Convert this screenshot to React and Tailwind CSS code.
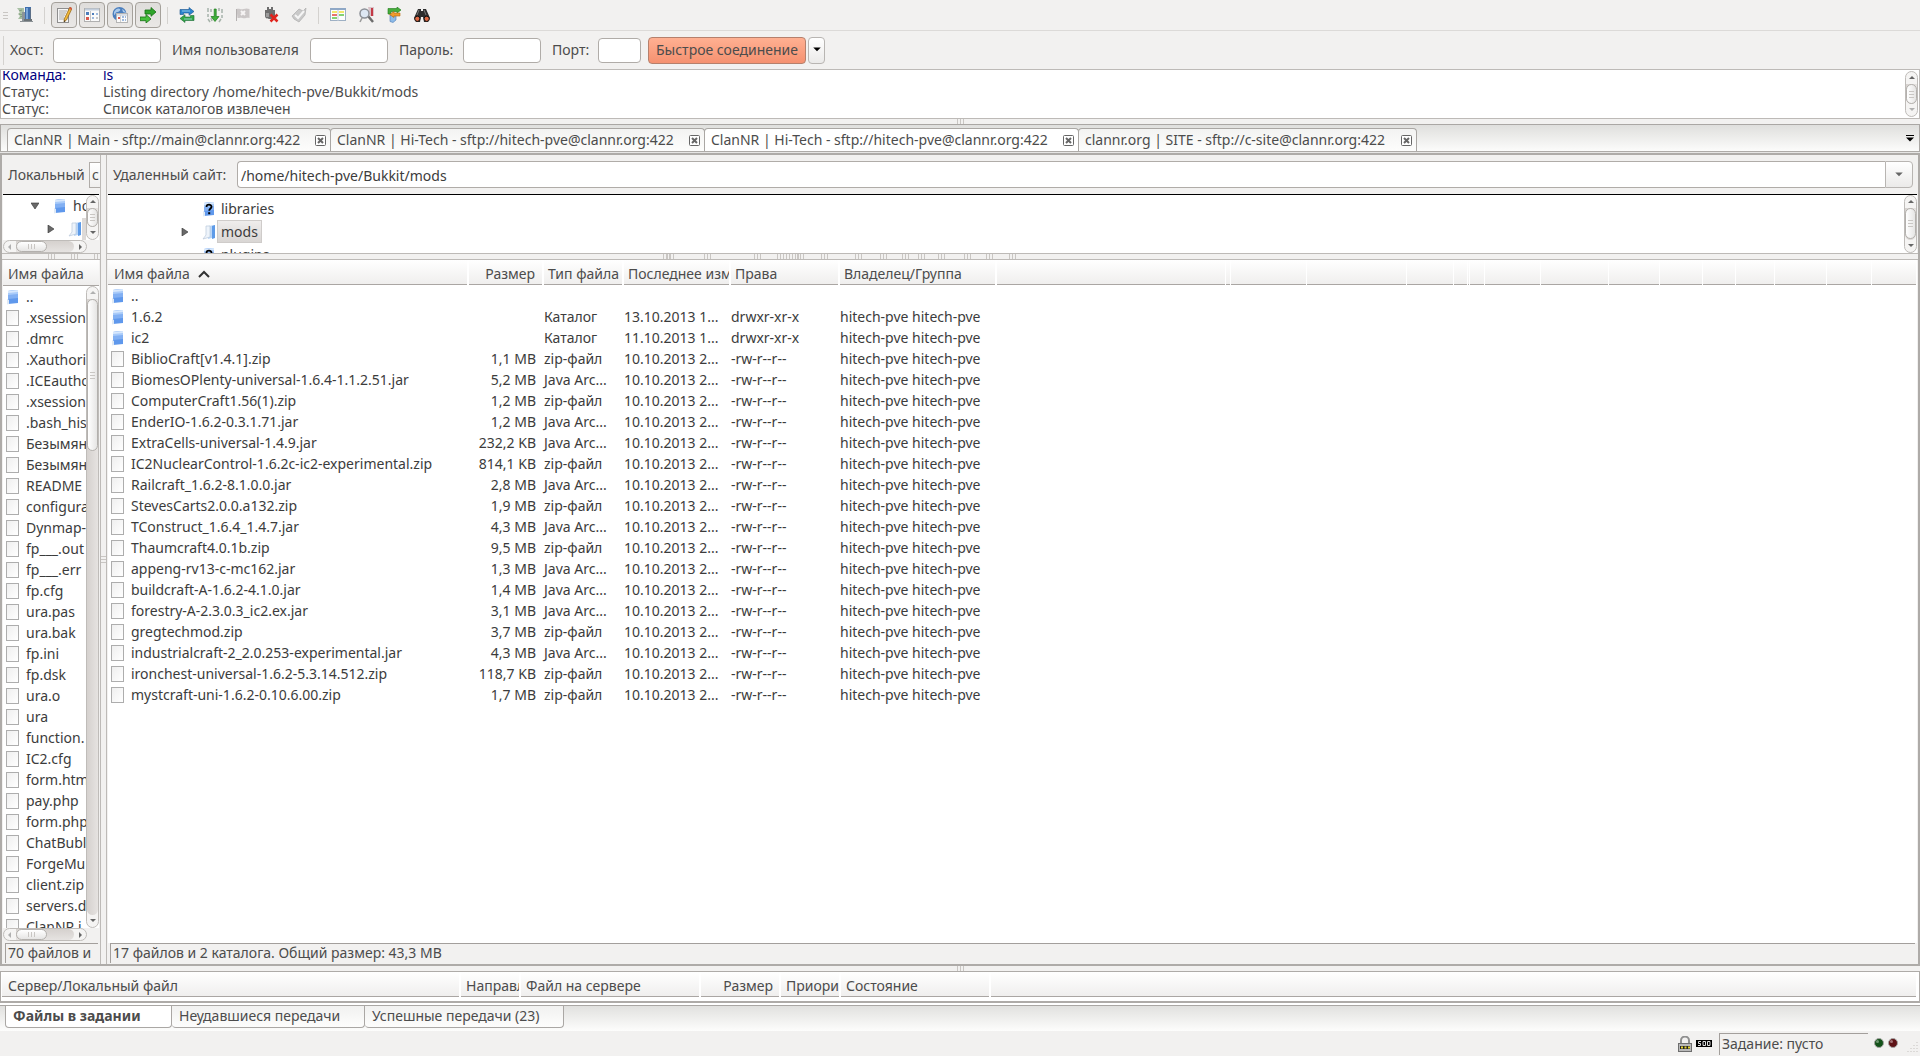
import { useState } from "react";
import clsx from "clsx";

const logLines = [
  { kind: "Команда:", text: "ls", command: true },
  { kind: "Статус:", text: "Listing directory /home/hitech-pve/Bukkit/mods" },
  { kind: "Статус:", text: "Список каталогов извлечен" },
];

const connections = [
  { id: 1, title: "ClanNR | Main - sftp://main@clannr.org:422", width: "w-[324px]" },
  { id: 2, title: "ClanNR | Hi-Tech - sftp://hitech-pve@clannr.org:422", width: "w-[375px]" },
  { id: 3, title: "ClanNR | Hi-Tech - sftp://hitech-pve@clannr.org:422", width: "w-[375px]" },
  { id: 4, title: "clannr.org | SITE - sftp://c-site@clannr.org:422", width: "w-[339px]" },
];

const localFiles = [
  "..", ".xsession", ".dmrc", ".Xauthori", ".ICEautho", ".xsession", ".bash_his", "Безымян",
  "Безымян", "README", "configura", "Dynmap-", "fp___.out", "fp___.err", "fp.cfg", "ura.pas",
  "ura.bak", "fp.ini", "fp.dsk", "ura.o", "ura", "function.", "IC2.cfg", "form.htm", "pay.php",
  "form.php", "ChatBubl", "ForgeMu", "client.zip", "servers.d", "ClanNR.j",
];

const dir = (name, date) => ({ name, size: "", type: "Каталог", date, perms: "drwxr-xr-x", owner: "hitech-pve hitech-pve", folder: true });
const file = (name, size) => ({
  name,
  size,
  type: name.endsWith(".zip") ? "zip-файл" : "Java Arc...",
  date: "10.10.2013 2...",
  perms: "-rw-r--r--",
  owner: "hitech-pve hitech-pve",
});

const remoteFiles = [
  { name: "..", size: "", type: "", date: "", perms: "", owner: "", folder: true },
  dir("1.6.2", "13.10.2013 1..."),
  dir("ic2", "11.10.2013 1..."),
  file("BiblioCraft[v1.4.1].zip", "1,1 MB"),
  file("BiomesOPlenty-universal-1.6.4-1.1.2.51.jar", "5,2 MB"),
  file("ComputerCraft1.56(1).zip", "1,2 MB"),
  file("EnderIO-1.6.2-0.3.1.71.jar", "1,2 MB"),
  file("ExtraCells-universal-1.4.9.jar", "232,2 KB"),
  file("IC2NuclearControl-1.6.2c-ic2-experimental.zip", "814,1 KB"),
  file("Railcraft_1.6.2-8.1.0.0.jar", "2,8 MB"),
  file("StevesCarts2.0.0.a132.zip", "1,9 MB"),
  file("TConstruct_1.6.4_1.4.7.jar", "4,3 MB"),
  file("Thaumcraft4.0.1b.zip", "9,5 MB"),
  file("appeng-rv13-c-mc162.jar", "1,3 MB"),
  file("buildcraft-A-1.6.2-4.1.0.jar", "1,4 MB"),
  file("forestry-A-2.3.0.3_ic2.ex.jar", "3,1 MB"),
  file("gregtechmod.zip", "3,7 MB"),
  file("industrialcraft-2_2.0.253-experimental.jar", "4,3 MB"),
  file("ironchest-universal-1.6.2-5.3.14.512.zip", "118,7 KB"),
  file("mystcraft-uni-1.6.2-0.10.6.00.zip", "1,7 MB"),
];

// empty header cells right of the owner column
const spareColumns = [229, 5, 76, 100, 47, 14, 2, 15, 56, 68, 51, 43, 33, 39, 52, 45];
const gripOffsets = [556, 560, 597, 647, 670, 673, 676, 679, 682, 685, 690, 714, 748, 773, 795, 811, 831, 857, 879, 902];

/* ---------- icons ---------- */

function Icon({ children }) {
  return (
    <svg viewBox="0 0 16 16" className="w-4 h-4 shrink-0" aria-hidden="true">
      {children}
    </svg>
  );
}

function SiteManagerIcon() {
  return (
    <Icon>
      <path d="M0 1h7v11H1l2-3-2-2 2-2z" fill="#a9c0a4" />
      <path d="M2 4l3-1M2 7l4 1M3 10l3-1" stroke="#7f9c7b" />
      <rect x="5" y="5" width="3" height="9" fill="#8b9499" />
      <rect x="8" y="0" width="6" height="13" fill="#3f6fae" />
      <rect x="9" y="1" width="2" height="11" fill="#7aa6d8" />
      <rect x="13" y="1" width="1" height="12" fill="#5c6f88" />
      <path d="M3 14h13v1H3z" fill="#8c9296" />
      <rect x="7" y="12" width="8" height="2" fill="#6b7276" />
    </Icon>
  );
}

function LogIcon() {
  return (
    <Icon>
      <rect x="1.5" y="1.5" width="11" height="14" fill="#f7f7f7" stroke="#8e8e8e" />
      <path d="M3 4h8M3 6h7M3 8h6M3 10h5M3 12h6" stroke="#a9a9a9" />
      <path d="M14 0l2 1.500L10.500 13 8 15l.3-3.200z" fill="#f0b93a" stroke="#8c5b12" strokeWidth=".7" />
      <path d="M14 0l2 1.500-.8 1.500-2-1.500z" fill="#d8544a" />
      <path d="M8 15l.2-1.800 1.200.8z" fill="#222" />
    </Icon>
  );
}

function LocalTreeIcon() {
  return (
    <Icon>
      <rect x=".5" y="1.500" width="15" height="13" fill="#fafafa" stroke="#b0b0b0" />
      <path d="M1 2.500h14" stroke="#c3cedc" strokeWidth="2" />
      <rect x="2" y="5" width="3" height="3" fill="#4d7dbb" />
      <rect x="2" y="10" width="3" height="3" fill="#d9584d" />
      <path d="M6.500 4v10" stroke="#c5c5c5" />
      <rect x="8" y="6" width="2" height="2" fill="#4d7dbb" />
      <rect x="12" y="6" width="2" height="2" fill="#9db8dc" />
      <rect x="8" y="10" width="2" height="2" fill="#9db8dc" />
      <rect x="12" y="10" width="2" height="2" fill="#c7c7c7" />
    </Icon>
  );
}

function RemoteTreeIcon() {
  return (
    <Icon>
      <circle cx="7.500" cy="7" r="7" fill="#4b7ebd" />
      <path d="M2 5c2-4 5-4 6-3s-1 3-3 3-1 3-3 3zM10 2c2 1 3 2 4 4l-3-1z" fill="#a9c9ea" />
      <rect x="4.500" y="6.500" width="11" height="9" fill="#fafafa" stroke="#b4b4b4" />
      <path d="M5 8h10" stroke="#b8c4d4" />
      <path d="M8.500 8v7" stroke="#cfcfcf" />
      <rect x="6" y="10" width="2" height="2" fill="#d9584d" />
      <path d="M10 10h2M13 10h1M10 13h2M13 13h1" stroke="#9db8dc" strokeWidth="2" />
    </Icon>
  );
}

function QueueIcon() {
  return (
    <Icon>
      <path d="M5 3h6V.5L16 5l-5 4.300V7H5z" fill="#2fa52b" stroke="#166f14" strokeWidth=".8" />
      <path d="M0 10h6V7.500L11 12l-5 4v-2.300H0z" fill="#46bf3d" stroke="#166f14" strokeWidth=".8" />
    </Icon>
  );
}

function RefreshIcon() {
  return (
    <Icon>
      <path d="M1 7.500V2.500h9V.5l5 4-5 3.800V6H4.500v1.500z" fill="#2b84cf" stroke="#17508b" strokeWidth=".6" />
      <path d="M15 8.500v5H6v2L1 11.500l5-3.800V10h5.500V8.500z" fill="#33a846" stroke="#176a35" strokeWidth=".6" />
      <path d="M3 4h8M5 12h8" stroke="#a5d8e8" strokeWidth=".8" />
    </Icon>
  );
}

function ProcessQueueIcon() {
  return (
    <Icon>
      <path d="M1 1v4M1 7v3M1 12l2 3M4 2v3M4 11l1 3M12 1v3M15 2v4M15 8v3M14 12l-2 3" stroke="#a7b3aa" strokeWidth="1.500" />
      <path d="M7.200 2h2v7.500H12L8 14.500l-4-5h3.200z" fill="#3fb13a" stroke="#1d7a1b" strokeWidth=".7" />
    </Icon>
  );
}

function CancelIcon() {
  return (
    <Icon>
      <path d="M1.500 2c3-1 4 1 7 0s4-.5 6 0v9c-3-1-4 1-7 0s-3 .5-5 0z" fill="#cbc7c7" />
      <path d="M1.500 2v12" stroke="#b4b0b0" />
      <path d="M6 4l4 4M10 4l-4 4" stroke="#f6f4f4" strokeWidth="2" />
    </Icon>
  );
}

function DisconnectIcon() {
  return (
    <Icon>
      <path d="M4 0h2v2h2V0h2v3h2v6c0 2-2 3-4 3S2 12 2 9V3h2z" fill="#6d6d6d" />
      <path d="M3 6h3v4H3z" fill="#9b9b9b" />
      <path d="M7.500 7.500l7 7M14.500 7.500l-7 7" stroke="#e0231c" strokeWidth="2.500" />
    </Icon>
  );
}

function ReconnectIcon() {
  return (
    <Icon>
      <path d="M1 9l7-7 4 2 3-3-1 7-6 7-5-3z" fill="#c9c9c9" stroke="#adadad" strokeWidth=".7" />
      <path d="M4 8l3 3 6-7" stroke="#f5f5f5" strokeWidth="2" fill="none" />
    </Icon>
  );
}

function CompareIcon() {
  return (
    <Icon>
      <rect x=".5" y="1.500" width="15" height="12" fill="#fdfdfd" stroke="#9eb0c4" />
      <path d="M0 2h16" stroke="#8fa8c6" strokeWidth="2" />
      <path d="M8 3v11" stroke="#c4cdd8" />
      <path d="M2 5h5M9 5h5" stroke="#efe03c" strokeWidth="1.500" />
      <path d="M2 8h5" stroke="#e0433b" strokeWidth="1.500" />
      <path d="M9 8h5M2 11h5" stroke="#5cc447" strokeWidth="1.500" />
    </Icon>
  );
}

function FilterIcon() {
  return (
    <Icon>
      <path d="M10 0h6v9h-4z" fill="#d9c3c8" />
      <path d="M14 1v8" stroke="#c43a46" strokeWidth="2" />
      <path d="M10 9l5 6" stroke="#6d6d6d" strokeWidth="2.500" />
      <circle cx="6.500" cy="6.500" r="4.500" fill="#dde7f3" stroke="#8b8f96" strokeWidth="1.500" />
      <path d="M4 11l-2 4" stroke="#9b9b9b" strokeWidth="1.500" />
    </Icon>
  );
}

function SyncBrowseIcon() {
  return (
    <Icon>
      <path d="M4 8h6v5l-3 2.500-3-1z" fill="#8ebbe8" stroke="#4a7ab5" strokeWidth=".6" />
      <path d="M2 1.500h9V0l4 3-4 3V4.500H5V7H2z" fill="#46ad3c" stroke="#1f7b1a" strokeWidth=".6" />
      <path d="M14 9V6H8V4.500L3.500 7.500 8 10.500V9z" fill="#ef9b2e" stroke="#b56a0c" strokeWidth=".6" />
    </Icon>
  );
}

function BinocularsIcon() {
  return (
    <Icon>
      <path d="M4 2h3v2h2V2h3l4 9-2 4h-4l-1-5H7l-1 5H2l-2-4z" fill="#2d2d2d" />
      <circle cx="3.300" cy="11.800" r="2.600" fill="#df6a45" stroke="#111" />
      <circle cx="12.700" cy="11.800" r="2.600" fill="#df6a45" stroke="#111" />
      <path d="M5 3l-2 5M10 3l2 5" stroke="#777" />
    </Icon>
  );
}

function FolderIcon({ unknown }) {
  return (
    <svg viewBox="0 0 14 16" className="w-[14px] h-4 shrink-0" aria-hidden="true">
      <path d="M2 2l10-1v13L2 15z" fill="#5f98ec" />
      <path d="M2 2l10-1v8L2 10z" fill="#82b0f3" />
      <path d="M2 2l10-1v4L2 6z" fill="#a9cbf9" />
      <path d="M2 2l10-1v2L2 4z" fill="#d7e8fd" />
      <path d="M1 10l2 1v4l-2 .5z" fill="#dfe9f5" />
      {unknown && (
        <>
          <path d="M4.500 6c0-3 5-3 5-.2 0 1.700-2.300 1.700-2.300 4" fill="none" stroke="#000" strokeWidth="1.800" />
          <rect x="6.200" y="11.200" width="2" height="2" fill="#000" />
        </>
      )}
    </svg>
  );
}

function OpenFolderIcon() {
  return (
    <svg viewBox="0 0 14 16" className="w-[14px] h-4 shrink-0" aria-hidden="true">
      <path d="M6 2l7-1v12l-7 2z" fill="#b9d6f8" />
      <path d="M10 2l3-1v13l-3 1z" fill="#5e9be8" />
      <path d="M4 2h4v11l-7 2 3-4z" fill="#eef4fb" stroke="#b9c9db" strokeWidth=".7" />
    </svg>
  );
}

function FileIcon() {
  return <span className="block w-[13px] h-4 shrink-0 border border-[#adadad] bg-linear-to-br from-[#efefef] to-white" />;
}

function Arrow({ dir = "down", className }) {
  const points = { down: "1,2 7,2 4,5", up: "1,5 7,5 4,2", left: "5,1 5,7 2,4", right: "3,1 3,7 6,4" };
  return (
    <svg viewBox="0 0 8 8" className={clsx("shrink-0", className || "w-2 h-2")} aria-hidden="true">
      <polygon points={points[dir]} fill="currentColor" />
    </svg>
  );
}

function Expander({ open }) {
  return (
    <svg viewBox="0 0 8 8" className="w-2 h-2 shrink-0" aria-hidden="true">
      <polygon points={open ? "0,1 8,1 4,7" : "1,0 1,8 7,4"} fill="#6a6a6a" stroke="#333" strokeWidth=".6" />
    </svg>
  );
}

/* ---------- small parts ---------- */

function ToolButton({ label, pressed, children }) {
  return (
    <button
      type="button"
      aria-label={label}
      className={clsx(
        "w-[26px] h-[26px] flex items-center justify-center rounded",
        pressed && "border border-[#a5a19b] bg-linear-to-b from-[#dfdddb] to-[#eae8e6]"
      )}
    >
      {children}
    </button>
  );
}

function ToolSeparator() {
  return <span className="w-px h-[17px] mx-[6px] bg-[#d4d2cf]" />;
}

function Grip({ vertical }) {
  return (
    <span className={clsx("flex gap-[2px]", vertical ? "flex-col" : "flex-row")}>
      {[0, 1, 2].map((i) => (
        <span key={i} className={clsx("bg-[#c9c6c3]", vertical ? "w-[5px] h-px" : "w-px h-[5px]")} />
      ))}
    </span>
  );
}

function VScroll({ thumb, dimUp, dimDown }) {
  return (
    <div className="w-[13px] shrink-0 flex flex-col rounded-full border border-[#bfbcb9] bg-[#f5f4f3] overflow-hidden">
      <button type="button" aria-label="Вверх" className={clsx("h-3 shrink-0 flex items-center justify-center", dimUp ? "text-[#b0b0b0]" : "text-[#666]")}>
        <Arrow dir="up" />
      </button>
      <div className="flex-1 min-h-0 rounded-b-full bg-linear-to-r from-[#d5d1ce] to-[#e6e3e1]">
        <div className={clsx("flex items-center justify-center rounded-full border border-[#b3b0ad] bg-linear-to-r from-white to-[#e6e5e4]", thumb)}>
          <Grip vertical />
        </div>
      </div>
      <button type="button" aria-label="Вниз" className={clsx("h-3 shrink-0 flex items-center justify-center", dimDown ? "text-[#b0b0b0]" : "text-[#666]")}>
        <Arrow dir="down" />
      </button>
    </div>
  );
}

function HScroll() {
  return (
    <div className="w-[84px] h-[13px] shrink-0 flex rounded-full border border-[#bfbcb9] bg-[#f5f4f3] overflow-hidden">
      <button type="button" aria-label="Влево" className="w-3 flex items-center justify-center text-[#b0b0b0]">
        <Arrow dir="left" />
      </button>
      <div className="flex-1 rounded-r-full bg-linear-to-b from-[#d5d1ce] to-[#e6e3e1]">
        <div className="w-[31px] h-full flex items-center justify-center rounded-full border border-[#b3b0ad] bg-linear-to-b from-white to-[#e6e5e4]">
          <Grip />
        </div>
      </div>
      <button type="button" aria-label="Вправо" className="w-3 flex items-center justify-center text-[#666]">
        <Arrow dir="right" />
      </button>
    </div>
  );
}

function HSplitter() {
  return (
    <div className="h-[5px] shrink-0 flex justify-center">
      <Grip />
    </div>
  );
}

function Th({ children, className, spare }) {
  return (
    <th
      className={clsx(
        "h-[25px] p-0 pt-[2px] font-normal text-left align-middle overflow-hidden border-white",
        spare ? "border-r" : "border-r-2",
        className
      )}
    >
      {children}
    </th>
  );
}

const headRow = "bg-linear-to-b from-white to-[#efeeed] text-[#4c4c4c] shadow-[inset_0_-1px_0_#aaa6a3]";
const field = "h-[25px] rounded border border-[#b0aca8] bg-white px-1 outline-none";

/* ---------- page sections ---------- */

function Toolbar() {
  return (
    <div className="h-[31px] shrink-0 flex items-center pl-[3px] border-b border-[#dcdad8]">
      <span className="mr-1">
        <Grip vertical />
      </span>
      <ToolButton label="Менеджер сайтов"><SiteManagerIcon /></ToolButton>
      <ToolSeparator />
      <div className="flex gap-[2px]">
        <ToolButton label="Журнал сообщений" pressed><LogIcon /></ToolButton>
        <ToolButton label="Локальное дерево" pressed><LocalTreeIcon /></ToolButton>
        <ToolButton label="Удаленное дерево" pressed><RemoteTreeIcon /></ToolButton>
        <ToolButton label="Очередь" pressed><QueueIcon /></ToolButton>
      </div>
      <ToolSeparator />
      <div className="flex gap-[2px]">
        <ToolButton label="Обновить"><RefreshIcon /></ToolButton>
        <ToolButton label="Обработать очередь"><ProcessQueueIcon /></ToolButton>
        <ToolButton label="Отмена"><CancelIcon /></ToolButton>
        <ToolButton label="Отключиться"><DisconnectIcon /></ToolButton>
        <ToolButton label="Переподключиться"><ReconnectIcon /></ToolButton>
      </div>
      <ToolSeparator />
      <div className="flex gap-[2px]">
        <ToolButton label="Сравнение каталогов"><CompareIcon /></ToolButton>
        <ToolButton label="Фильтры"><FilterIcon /></ToolButton>
        <ToolButton label="Синхронный просмотр"><SyncBrowseIcon /></ToolButton>
        <ToolButton label="Поиск файлов"><BinocularsIcon /></ToolButton>
      </div>
    </div>
  );
}

function QuickConnect() {
  return (
    <form className="h-[38px] shrink-0 flex items-center pl-[3px] whitespace-nowrap" onSubmit={(e) => e.preventDefault()}>
      <span className="w-px h-[29px] mr-[6px] bg-[#d4d2cf]" />
      <label htmlFor="host" className="w-[43px]">Хост:</label>
      <input id="host" className={clsx(field, "w-[108px] mr-[11px]")} />
      <label htmlFor="user" className="w-[138px]">Имя пользователя</label>
      <input id="user" className={clsx(field, "w-[78px] mr-[11px]")} />
      <label htmlFor="password" className="w-[64px]">Пароль:</label>
      <input id="password" type="password" className={clsx(field, "w-[78px] mr-[11px]")} />
      <label htmlFor="port" className="w-[46px]">Порт:</label>
      <input id="port" className={clsx(field, "w-[43px] mr-[7px]")} />
      <button type="submit" className="w-[158px] h-[27px] mr-[2px] rounded border border-[#b5806c] bg-linear-to-b from-[#ffb092] to-[#f59170]">
        Быстрое соединение
      </button>
      <button type="button" aria-label="История соединений" className="w-[17px] h-[27px] flex items-center justify-center rounded border border-[#b8b5b2] bg-linear-to-b from-white to-[#ebeae9] text-black">
        <Arrow className="w-[10px] h-[10px]" />
      </button>
    </form>
  );
}

function MessageLog() {
  return (
    <div className="h-[50px] shrink-0 flex border border-[#bdbab7] bg-white p-px">
      <div className="flex-1 flex flex-col justify-end overflow-hidden">
        {logLines.map((line, i) => (
          <div key={i} className={clsx("flex h-[17px] leading-[17px] shrink-0", line.command && "text-[#00007f]")}>
            <span className="w-[101px]">{line.kind}</span>
            <span>{line.text}</span>
          </div>
        ))}
      </div>
      <VScroll thumb="h-5" dimDown />
    </div>
  );
}

function ConnectionTabs({ active, onSelect }) {
  return (
    <div className="shrink-0 h-[27px] flex items-end border border-b-0 border-[#aaa7a4] bg-linear-to-b from-[#dfdfdd] to-[#fcfcfb] pl-[6px]">
      {connections.map((c) => (
        <div
          key={c.id}
          className={clsx(
            "h-[23px] flex items-center -mr-px pl-[6px] pr-[4px] rounded-t-sm border border-b-0 border-[#aaa7a4] bg-linear-to-b",
            active === c.id ? "from-white to-white" : "from-[#f3f3f2] to-[#fdfdfc]",
            c.width
          )}
        >
          <button type="button" onClick={() => onSelect(c.id)} className="flex-1 text-left whitespace-nowrap overflow-hidden">
            {c.title}
          </button>
          <button type="button" aria-label="Закрыть вкладку" className="text-[#666]">
            <svg viewBox="0 0 11 11" className="w-[11px] h-[11px] block">
              <rect x=".5" y=".5" width="10" height="10" rx="1" fill="#fff" stroke="currentColor" />
              <path d="M3 3l5 5M8 3l-5 5" stroke="currentColor" strokeWidth="2" />
            </svg>
          </button>
        </div>
      ))}
      <button type="button" aria-label="Список вкладок" className="ml-auto self-center mr-[5px]">
        <svg viewBox="0 0 8 7" className="w-2 h-[7px] block">
          <path d="M0 .5h8" stroke="#000" />
          <polygon points="0,2.500 8,2.500 4,6.500" fill="#000" />
        </svg>
      </button>
    </div>
  );
}

function LocalPanel() {
  return (
    <section className="w-[99px] shrink-0 flex flex-col border-r border-[#bdbab7] overflow-hidden">
      <div className="h-[39px] shrink-0 flex items-center pl-[6px] whitespace-nowrap">
        <span className="w-[81px] shrink-0">Локальный</span>
        <span className="flex-1 h-[26px] flex items-center border border-r-0 border-[#b0aca8] bg-linear-to-b from-white to-[#f0efee] pl-[2px]">с</span>
      </div>
      <div className="h-[59px] shrink-0 mx-px border-t border-black">
        <div className="h-[45px] flex bg-white">
          <div className="flex-1 overflow-hidden whitespace-nowrap text-[#3c3c3c]">
            <div className="h-[22px] flex items-center pl-7">
              <Expander open />
              <span className="w-[14px] shrink-0" />
              <FolderIcon />
              <span className="pl-[6px]">ho</span>
            </div>
            <div className="h-[23px] flex items-center pl-[44px]">
              <Expander />
              <span className="w-[13px] shrink-0" />
              <OpenFolderIcon />
              <span className="w-4 h-[22px] bg-[#dddad8]" />
            </div>
          </div>
          <VScroll thumb="h-[19px]" />
        </div>
        <HScroll />
      </div>
      <div className="h-[7px] shrink-0 flex items-center gap-4 pl-[46px] border-y border-[#bdbab7]">
        <Grip />
        <Grip />
        <Grip />
      </div>
      <div className="flex-1 min-h-0 flex flex-col mx-px">
        <div className="flex-1 min-h-0 flex flex-col bg-white">
          <div className="h-[26px] shrink-0 flex items-center pl-[5px] pt-[2px] whitespace-nowrap border-b border-[#aaa6a3] bg-linear-to-b from-white to-[#efeeed]">
            Имя файла
          </div>
          <div className="flex-1 min-h-0 flex">
            <ul className="flex-1 overflow-hidden whitespace-nowrap text-[#3c3c3c]">
              {localFiles.map((name, i) => (
                <li key={i} className="h-[21px] flex items-center pl-[3px]">
                  {name === ".." ? <FolderIcon /> : <FileIcon />}
                  <span className={name === ".." ? "pl-[6px]" : "pl-[7px]"}>{name}</span>
                </li>
              ))}
            </ul>
            <VScroll thumb="h-[152px]" dimUp />
          </div>
        </div>
        <HScroll />
      </div>
      <div className="h-5 shrink-0 mt-[2px] mb-px ml-[3px] mr-[2px] pl-[2px] pb-[2px] flex items-center border-t border-l border-[#a39f9c] whitespace-nowrap">
        70 файлов и
      </div>
    </section>
  );
}

function RemoteTree() {
  return (
    <div className="h-[59px] shrink-0 mx-px flex border-t border-black bg-white">
      <div className="flex-1 overflow-hidden pt-[2px] text-[#3c3c3c]">
        <div className="h-[23px] flex items-center pl-[94px]">
          <FolderIcon unknown />
          <span className="pl-[5px]">libraries</span>
        </div>
        <div className="h-[23px] flex items-center pl-[73px]">
          <Expander />
          <span className="w-[13px]" />
          <OpenFolderIcon />
          <span className="h-[23px] flex items-center px-[3px] ml-px border border-[#cfccca] bg-linear-to-b from-[#efedec] to-[#d9d6d4]">mods</span>
        </div>
        <div className="h-[23px] flex items-center pl-[94px]">
          <FolderIcon unknown />
          <span className="pl-[5px]">plugins</span>
        </div>
      </div>
      <VScroll thumb="h-[31px]" />
    </div>
  );
}

function RemoteTable() {
  return (
    <div className="flex-1 min-h-0 mx-px bg-white overflow-hidden">
      <table className="w-full table-fixed border-collapse whitespace-nowrap">
        <colgroup>
          <col className="w-[360px]" />
          <col className="w-[75px]" />
          <col className="w-[80px]" />
          <col className="w-[107px]" />
          <col className="w-[109px]" />
          <col className="w-[157px]" />
          {spareColumns.map((w, i) => (
            <col key={i} style={{ width: w }} />
          ))}
          <col />
        </colgroup>
        <thead>
          <tr className={headRow}>
            <Th>
              <span className="flex items-center gap-2 pl-[6px]">
                Имя файла
                <svg viewBox="0 0 12 8" className="w-3 h-2">
                  <path d="M1 7l5-5 5 5" fill="none" stroke="#333" strokeWidth="2" />
                </svg>
              </span>
            </Th>
            <Th className="text-right pr-[7px]">Размер</Th>
            <Th className="pl-[4px]">Тип файла</Th>
            <Th className="pl-[4px]">Последнее изм</Th>
            <Th className="pl-[4px]">Права</Th>
            <Th className="pl-[4px]">Владелец/Группа</Th>
            {spareColumns.map((w, i) => (
              <Th key={i} spare />
            ))}
            <Th spare />
          </tr>
        </thead>
        <tbody className="text-[#3c3c3c]">
          {remoteFiles.map((f) => (
            <tr key={f.name} className="h-[21px] leading-[21px]">
              <td className="p-0">
                <span className="flex items-center pl-[3px]">
                  {f.folder ? <FolderIcon /> : <FileIcon />}
                  <span className={f.folder ? "pl-[6px]" : "pl-[7px]"}>{f.name}</span>
                </span>
              </td>
              <td className="p-0 pr-[7px] text-right">{f.size}</td>
              <td className="p-0 pl-px">{f.type}</td>
              <td className="p-0 pl-px">{f.date}</td>
              <td className="p-0 pl-px">{f.perms}</td>
              <td className="p-0 pl-px">{f.owner}</td>
            </tr>
          ))}
        </tbody>
      </table>
    </div>
  );
}

function RemotePanel() {
  return (
    <section className="flex-1 min-w-0 flex flex-col border-l border-[#bdbab7]">
      <div className="h-[39px] shrink-0 flex items-center pl-[6px] pr-[5px] whitespace-nowrap">
        <label htmlFor="remote" className="w-[124px]">Удаленный сайт:</label>
        <input
          id="remote"
          defaultValue="/home/hitech-pve/Bukkit/mods"
          className="flex-1 h-[27px] rounded-l border border-r-0 border-[#b0aca8] bg-white px-[3px] pt-px text-[#3c3c3c] outline-none"
        />
        <button type="button" aria-label="Выбрать каталог" className="w-[28px] h-[27px] flex items-center justify-center rounded-r border border-[#b8b5b2] bg-linear-to-b from-white to-[#ebeae9] text-[#666]">
          <Arrow className="w-[10px] h-[10px]" />
        </button>
      </div>
      <RemoteTree />
      <div className="relative h-[7px] shrink-0 border-y border-[#bdbab7]">
        {gripOffsets.map((x) => (
          <span key={x} className="absolute top-0" style={{ left: x }}>
            <Grip />
          </span>
        ))}
      </div>
      <RemoteTable />
      <div className="h-5 shrink-0 mb-px mx-[3px] pl-[2px] pb-[2px] flex items-center border-t border-l border-[#a39f9c]">
        17 файлов и 2 каталога. Общий размер: 43,3 MB
      </div>
    </section>
  );
}

function Queue() {
  return (
    <div className="h-[32px] shrink-0 border border-b-2 border-[#aeaba8] bg-white px-px">
      <table className="w-full table-fixed border-collapse whitespace-nowrap">
        <colgroup>
          <col className="w-[458px]" />
          <col className="w-[60px]" />
          <col className="w-[180px]" />
          <col className="w-[80px]" />
          <col className="w-[60px]" />
          <col className="w-[150px]" />
          <col />
        </colgroup>
        <thead>
          <tr className={headRow}>
            <Th className="pl-[6px]">Сервер/Локальный файл</Th>
            <Th className="pl-[5px]">Направл</Th>
            <Th className="pl-[5px]">Файл на сервере</Th>
            <Th className="text-right pr-[6px]">Размер</Th>
            <Th className="pl-[5px]">Приори</Th>
            <Th className="pl-[5px]">Состояние</Th>
            <Th />
          </tr>
        </thead>
      </table>
    </div>
  );
}

function QueueTabs() {
  const tab = "h-[22px] pl-[7px] pb-[2px] leading-[19px] text-left rounded-b-sm border border-t-0 border-[#aaa7a4] bg-linear-to-b whitespace-nowrap";
  return (
    <div className="shrink-0 pt-[2px] bg-white">
      <div className="h-[26px] flex items-start pl-[5px] border-t border-[#aaa7a4] bg-linear-to-b from-[#e1e1df] to-[#fdfdfc]">
        <button type="button" className={clsx(tab, "w-[167px] from-white to-white font-bold")}>Файлы в задании</button>
        <button type="button" className={clsx(tab, "w-[193px] border-l-0 from-[#f1f1f0] to-[#fdfdfc]")}>Неудавшиеся передачи</button>
        <button type="button" className={clsx(tab, "w-[199px] border-l-0 from-[#f1f1f0] to-[#fdfdfc]")}>Успешные передачи (23)</button>
      </div>
    </div>
  );
}

function StatusBar() {
  return (
    <footer className="h-[25px] shrink-0 flex items-center justify-end">
      <svg viewBox="0 0 14 16" className="w-[14px] h-4 mr-[4px]" aria-hidden="true">
        <path d="M3 8V4.500a4 4 0 0 1 8 0V8" fill="none" stroke="#8f8f8f" strokeWidth="2" />
        <rect x=".5" y="7.500" width="13" height="8" fill="#b9b9b9" stroke="#6e6e6e" />
        <rect x="2" y="10" width="10" height="3" fill="#222" />
        <path d="M3 11.500h2M6.500 11.500h2M10 11.500h2" stroke="#e8d532" strokeWidth="2" />
      </svg>
      <svg viewBox="0 0 16 7" className="w-4 h-[7px] mr-[7px]" aria-hidden="true">
        <rect width="16" height="7" fill="#000" />
        <path d="M5 1.500H2.500v2h2v2H2M7 1.500h2.500v4H7zM11.500 1.500H14v4h-2.500z" fill="none" stroke="#ddd" />
      </svg>
      <div className="w-[149px] h-[22px] pl-[2px] flex items-center border-t border-l border-[#a39f9c]">Задание: пусто</div>
      <svg viewBox="0 0 52 16" className="w-[52px] h-4" aria-hidden="true">
        <circle cx="11" cy="7" r="4.500" fill="#14521a" stroke="#a6a6a4" />
        <circle cx="25" cy="7" r="4.500" fill="#5e1216" stroke="#a6a6a4" />
        <circle cx="9.500" cy="5.500" r="1.500" fill="#6f9872" />
        <circle cx="23.500" cy="5.500" r="1.500" fill="#a37376" />
        <path d="M49 6v10M46 9v7M43 12v4M40 15v1" stroke="#c5c2bf" strokeDasharray="1 2" />
      </svg>
    </footer>
  );
}

export default function App() {
  const [active, setActive] = useState(3);

  return (
    <div className="h-screen flex flex-col overflow-hidden bg-[#f2f1f0] text-[#4c4c4c] text-[14px] leading-[20px] font-['Noto_Sans','Open_Sans',sans-serif]">
      <Toolbar />
      <QuickConnect />
      <MessageLog />
      <HSplitter />
      <ConnectionTabs active={active} onSelect={setActive} />
      <div className="h-1 shrink-0 border-t border-b-2 border-[#aeaba8] bg-[#e6e5e4]" />
      <main className="flex-1 min-h-0 flex border-2 border-t-0 border-[#aeaba8]">
        <LocalPanel />
        <div className="w-[5px] shrink-0 flex items-center">
          <Grip vertical />
        </div>
        <RemotePanel />
      </main>
      <HSplitter />
      <Queue />
      <QueueTabs />
      <StatusBar />
    </div>
  );
}
